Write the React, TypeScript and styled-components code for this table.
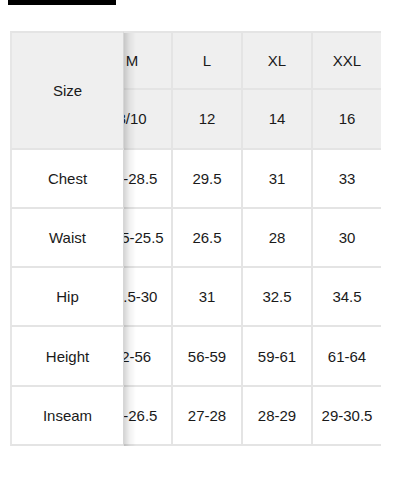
import React, { useLayoutEffect, useRef } from "react";
import styled, { createGlobalStyle } from "styled-components";

type SizeCol = {
  label: string;
  age: string;
  width: number;
  values: string[];
};

const measures = ["Chest", "Waist", "Hip", "Height", "Inseam"];

const columns: SizeCol[] = [
  { label: "XS", age: "4/5", width: 80, values: ["23-24", "21-22", "24-25", "42-46", "19-21"] },
  { label: "S", age: "6/7", width: 80, values: ["25-26.5", "22.5-23.5", "26-27.5", "47-51", "22-24"] },
  { label: "M", age: "8/10", width: 80, values: ["27-28.5", "24.5-25.5", "28.5-30", "52-56", "25-26.5"] },
  { label: "L", age: "12", width: 70, values: ["29.5", "26.5", "31", "56-59", "27-28"] },
  { label: "XL", age: "14", width: 70, values: ["31", "28", "32.5", "59-61", "28-29"] },
  { label: "XXL", age: "16", width: 70, values: ["33", "30", "34.5", "61-64", "29-30.5"] },
];

const STICKY_W = 114;
const ROW_H = 59.3;
const START_SCROLL = 191;

const GlobalStyle = createGlobalStyle`
  body {
    margin: 0;
    background: #fff;
    font-family: "Liberation Sans", Arial, sans-serif;
    color: #1a1a1a;
  }
`;

const Page = styled.div`
  display: flex;
  flex-direction: column;
  align-items: flex-start;
`;

const TopBar = styled.div`
  width: 108px;
  height: 5px;
  margin-left: 8px;
  background: #000;
`;

const Scroller = styled.div`
  width: 371px;
  margin: 26px 0 0 10px;
  overflow-x: auto;
  scrollbar-width: none;
  &::-webkit-scrollbar {
    display: none;
  }
`;

const Table = styled.table`
  border-collapse: separate;
  border-spacing: 0;
  table-layout: fixed;
  width: ${STICKY_W + columns.reduce((s, c) => s + c.width, 0)}px;
  font-size: 15px;
`;

const Col = styled.col<{ $w: number }>`
  width: ${(p) => p.$w}px;
`;

const Cell = styled.td<{ $head?: boolean; $top?: boolean; $last?: boolean }>`
  box-sizing: border-box;
  height: ${ROW_H}px;
  padding: 0 4px;
  text-align: center;
  vertical-align: middle;
  white-space: nowrap;
  font-weight: normal;
  background: ${(p) => (p.$head ? "#efefef" : "#fff")};
  border-bottom: 2px solid #e4e4e4;
  border-right: ${(p) => (p.$last ? "2px solid #ebebeb" : "2px solid #e4e4e4")};
  border-top: ${(p) => (p.$top ? "2px solid #e4e4e4" : "none")};
`;

const StickyCell = styled(Cell)<{ $span?: number }>`
  position: sticky;
  left: 0;
  z-index: 2;
  height: ${(p) => ROW_H * (p.$span ?? 1)}px;
  border-left: 2px solid #e6e6e6;
  border-right: 1px solid #d6d6d6;

  &::after {
    content: "";
    position: absolute;
    top: 0;
    bottom: -2px;
    right: -13px;
    width: 12px;
    pointer-events: none;
    background: linear-gradient(
      to right,
      rgba(0, 0, 0, 0.17),
      rgba(0, 0, 0, 0.06) 45%,
      rgba(0, 0, 0, 0)
    );
  }
`;

export default function App() {
  const scrollRef = useRef<HTMLDivElement>(null);

  useLayoutEffect(() => {
    if (scrollRef.current) scrollRef.current.scrollLeft = START_SCROLL;
  }, []);

  return (
    <>
      <GlobalStyle />
      <Page>
        <TopBar />
        <Scroller ref={scrollRef}>
          <Table>
            <colgroup>
              <Col $w={STICKY_W} />
              {columns.map((c) => (
                <Col key={c.label} $w={c.width} />
              ))}
            </colgroup>
            <thead>
              <tr>
                <StickyCell as="th" rowSpan={2} $span={2} $head $top>
                  Size
                </StickyCell>
                {columns.map((c, i) => (
                  <Cell as="th" key={c.label} $head $top $last={i === columns.length - 1}>
                    {c.label}
                  </Cell>
                ))}
              </tr>
              <tr>
                {columns.map((c, i) => (
                  <Cell as="th" key={c.label} $head $last={i === columns.length - 1}>
                    {c.age}
                  </Cell>
                ))}
              </tr>
            </thead>
            <tbody>
              {measures.map((m, r) => (
                <tr key={m}>
                  <StickyCell as="th">{m}</StickyCell>
                  {columns.map((c, i) => (
                    <Cell key={c.label} $last={i === columns.length - 1}>
                      {c.values[r]}
                    </Cell>
                  ))}
                </tr>
              ))}
            </tbody>
          </Table>
        </Scroller>
      </Page>
    </>
  );
}
